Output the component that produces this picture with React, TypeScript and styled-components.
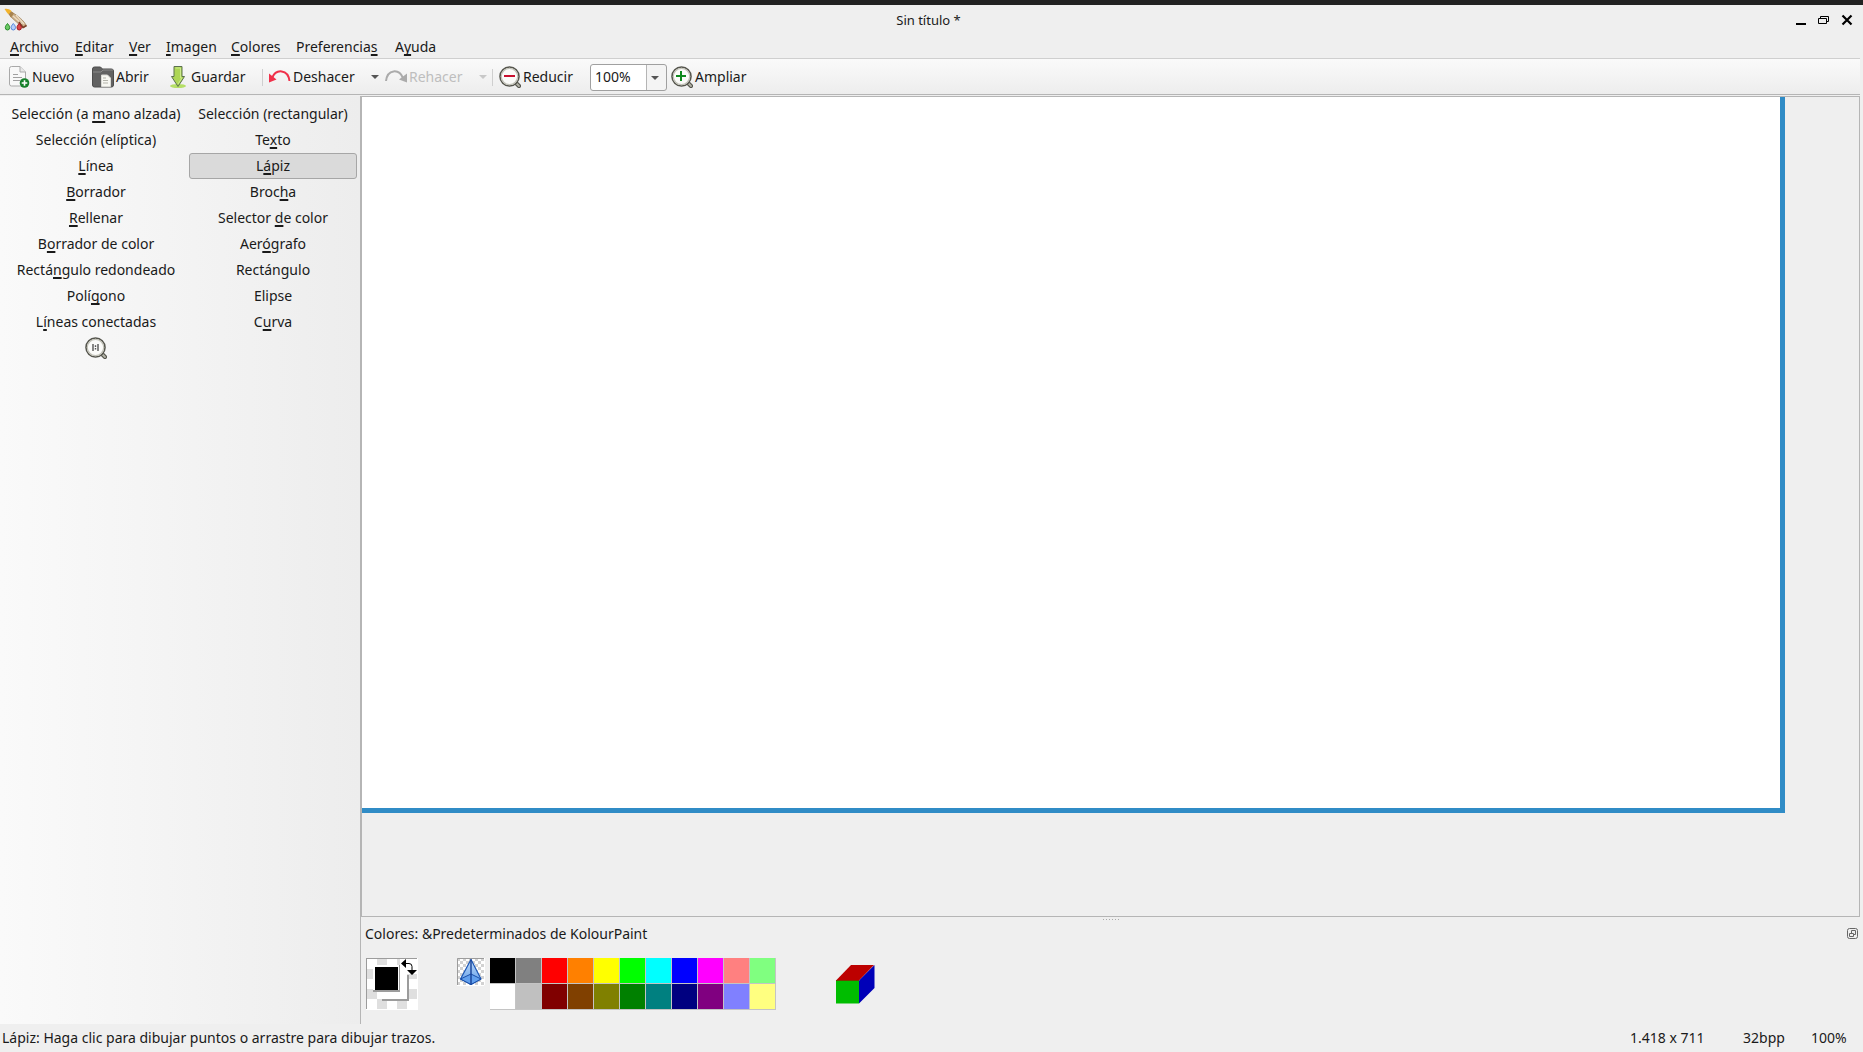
import React, { useState } from "react";
import styled, { createGlobalStyle, css } from "styled-components";

const INK = "#1a1a1a";
const LINE = "#b5b5b5";
const BASE = "#efefef";

const GlobalStyle = createGlobalStyle`
  *, *::before, *::after { box-sizing: border-box; }
  body { margin: 0; background: ${BASE}; }
  body, button, select { font: 14px/20px "Noto Sans", sans-serif; color: ${INK}; }
  button { margin: 0; padding: 0; border: 0; background: none; }
  svg { display: block; flex: none; }
`;

const Window = styled.div`
  display: flex;
  flex-direction: column;
  min-height: 100vh;
  border-top: 5px solid #222;
  background: ${BASE};
`;

const TitleBar = styled.header`
  display: grid;
  grid-template-columns: 1fr auto 1fr;
  align-items: center;
  height: 30px;
  padding: 0 10px 0 4px;
`;

const Title = styled.h1`
  margin: 0;
  font: inherit;
  font-size: 13px;
`;

const WindowControls = styled.div`
  display: flex;
  justify-content: flex-end;
  gap: 11px;
`;

const MenuBar = styled.nav`
  display: grid;
  grid-template-columns: 65px 54px 37px 65px 65px 99px 57px;
  height: 23px;
  padding-left: 10px;
`;

const MenuButton = styled.button`
  text-align: left;
  white-space: nowrap;
`;

const Key = styled.span`
  text-decoration: underline;
  text-decoration-thickness: 2px;
  text-underline-offset: 2px;
  text-decoration-skip-ink: none;
`;

const ToolBar = styled.div`
  display: flex;
  align-items: center;
  height: 37px;
  margin-right: 3px;
  padding: 1px 9px 0 8px;
  border-top: 1px solid #cfcfcf;
  border-bottom: 1px solid ${LINE};
  background: linear-gradient(#fafafa, #ededed);
`;

const ToolButton = styled.button<{ $width: number }>`
  display: flex;
  align-items: center;
  gap: 2px;
  width: ${(p) => p.$width}px;
  white-space: nowrap;
  &:disabled { color: #bebebe; }
`;

const CaretButton = styled.button<{ $width: number }>`
  width: ${(p) => p.$width}px;
  color: #555;
  &:disabled { color: #c8c8c8; }
`;

const Separator = styled.span`
  width: 1px;
  height: 17px;
  margin-right: 6px;
  background: #cfcfcf;
`;

const ZoomBox = styled.label`
  position: relative;
  width: 77px;
  height: 27px;
  margin-right: 4px;
  border: 1px solid #a0a0a0;
  border-radius: 3px;
  background: linear-gradient(to right, #fff 55px, #b5b5b5 55px, #b5b5b5 56px, #f4f4f4 56px);
  svg { position: absolute; right: 7px; top: 11px; color: #555; pointer-events: none; }
`;

const ZoomSelect = styled.select`
  width: 100%;
  height: 100%;
  padding: 0 0 0 4px;
  border: 0;
  appearance: none;
  background: transparent;
`;

const Workspace = styled.main`
  display: grid;
  grid-template-columns: 361px 1fr;
  flex: 1;
  padding-top: 1px;
`;

const SidePanel = styled.aside`
  padding: 5px 3px 0 4px;
  border-right: 1px solid ${LINE};
  background: linear-gradient(to right, #fafafa, #ededed);
`;

const ToolGrid = styled.div`
  display: grid;
  grid-template-columns: 184px 168px;
  grid-auto-rows: 26px;
  gap: 0 1px;
`;

const Tool = styled.button<{ $active: boolean }>`
  display: flex;
  align-items: center;
  justify-content: center;
  border: 1px solid transparent;
  border-radius: 3px;
  white-space: pre;
  ${(p) => p.$active && css`border-color: #a6a6a6; background: #dadada;`}
`;

const RightSide = styled.div`
  display: flex;
  flex-direction: column;
  min-width: 0;
  padding-right: 3px;
`;

const Viewport = styled.section`
  flex: 1;
  border: 1px solid ${LINE};
  overflow: hidden;
`;

const Sheet = styled.div`
  width: 1423px;
  height: 716px;
  border: solid #308cc6;
  border-width: 0 5px 5px 0;
  background: #fff;
`;

const Splitter = styled.div`
  display: flex;
  justify-content: center;
  gap: 2px;
  height: 7px;
  padding-top: 2px;
`;

const Dot = styled.i`
  width: 1px;
  height: 1px;
  background: #aaa;
`;

const DockHeader = styled.div`
  display: flex;
  align-items: center;
  justify-content: space-between;
  padding: 0 1px 0 4px;
`;

const DockTitle = styled.h2`
  margin: 0;
  font: inherit;
`;

const Palette = styled.div`
  display: flex;
  align-items: flex-start;
  padding: 14px 0 14px 5px;
`;

const Pair = styled.button`
  width: 52px;
  height: 52px;
  margin-right: 39px;
`;

const Clear = styled.button`
  width: 28px;
  height: 28px;
  margin-right: 5px;
`;

const Swatches = styled.div`
  display: grid;
  grid-template-columns: repeat(11, 26px);
  grid-auto-rows: 26px;
  margin-right: 60px;
`;

const Swatch = styled.button<{ $color: string }>`
  border: solid #c4c4c4;
  border-width: 0 1px 1px 0;
  background: ${(p) => p.$color};
`;

const CubeHolder = styled.div`
  padding-top: 7px;
`;

const StatusBar = styled.footer`
  display: flex;
  align-items: center;
  justify-content: space-between;
  height: 28px;
  padding: 0 15px 0 2px;
`;

const StatusInfo = styled.div`
  display: grid;
  grid-template-columns: 113px 68px 37px;
  white-space: nowrap;
`;

/* A "&" marks the accelerator letter. */
const Label = ({ text }: { text: string }) => {
  const at = text.indexOf("&");
  if (at < 0) return <span>{text}</span>;
  return (
    <span>
      {text.slice(0, at)}
      <Key>{text[at + 1]}</Key>
      {text.slice(at + 2)}
    </span>
  );
};

const Caret = () => (
  <svg width="8" height="4" viewBox="0 0 8 4" fill="currentColor">
    <path d="M0 0h8L4 4z" />
  </svg>
);

const AppIcon = () => (
  <svg width="24" height="24" viewBox="0 0 24 24">
    <path d="M8 4.500c5 2.500 12 8 14.500 13.500l-3.500 2C15 16 10 12 6 8z" fill="#cdb08a" stroke="#a08259" strokeWidth=".8" />
    <path d="M9 8l9 8M12 7l8 9" stroke="#ecdcc4" strokeWidth="1.200" />
    <path d="M15 14l4 5.500 3.500-2" fill="none" stroke="#7b3f2a" strokeWidth="1.600" />
    <path d="M7 3l3 2.500-3 4L4.500 6z" fill="#a8834f" />
    <path d="M.5 1c2-.8 5 0 7 2L4.500 6.500C3 5 2 3 .5 1z" fill="#f2b32c" />
    <path d="M3.500 15.500c1.700 2 2.200 3 2.200 4a2.200 2.500 0 01-4.400 0c0-1 .5-2 2.200-4z" fill="#6cc965" stroke="#258a28" />
    <path d="M9.300 15.500c1.700 2 2.200 3 2.200 4a2.200 2.500 0 01-4.400 0c0-1 .5-2 2.200-4z" fill="#b4cffb" stroke="#5585d8" />
    <path d="M15.200 15.500c1.700 2 2.200 3 2.200 4a2.200 2.500 0 01-4.400 0c0-1 .5-2 2.200-4z" fill="#d8474b" stroke="#a3141a" />
  </svg>
);

const NewIcon = () => (
  <svg width="22" height="22" viewBox="0 0 22 22">
    <path d="M1.500 2.500a2 2 0 012-2h8.500l5.500 5.500v12a2 2 0 01-2 2H3.500a2 2 0 01-2-2z" fill="#f8f8f8" stroke="#a9a9a9" />
    <path d="M12 .5V6h5.500" fill="#e8e8e8" stroke="#a9a9a9" />
    <path d="M5 8.500h5M5 11.500h9M5 14.500h7" stroke="#a0a0a0" />
    <circle cx="16.500" cy="17" r="4.800" fill="#15802a" />
    <path d="M16.500 14.200v5.600M13.700 17h5.600" stroke="#fff" strokeWidth="1.600" />
  </svg>
);

const OpenIcon = () => (
  <svg width="22" height="22" viewBox="0 0 22 22">
    <path d="M.5 3a2 2 0 012-2h6l2 2h9a2 2 0 012 2v14a2 2 0 01-2 2h-17a2 2 0 01-2-2z" fill="#626262" stroke="#4d4d4d" />
    <path d="M1 6h8l2-2h10" fill="none" stroke="#8a8a8a" />
    <path d="M9.500 9h6l3 3v8.500h-9z" fill="#f7f7f2" stroke="#d9d9d4" />
    <path d="M11 12h3M11 14.500h5M11 17h5" stroke="#b3b3aa" />
  </svg>
);

const SaveIcon = () => (
  <svg width="22" height="22" viewBox="0 0 22 22">
    <ellipse cx="11" cy="20" rx="8" ry="2" fill="#b5df67" />
    <path d="M7 .5h8v10h2.500L11 20.500 4.500 10.500H7z" fill="#add655" stroke="#5c7050" />
    <path d="M8.500 2h5v10h1.500L11 18" fill="none" stroke="#cdeb8b" />
  </svg>
);

const UndoIcon = () => (
  <svg width="22" height="22" viewBox="0 0 22 22">
    <path d="M3 12C7 2.500 19 3 20.500 15" fill="none" stroke="#f0314a" strokeWidth="2" />
    <path d="M0 7.500v9l7.500-3z" fill="#f0314a" />
  </svg>
);

const RedoIcon = () => (
  <svg width="22" height="22" viewBox="0 0 22 22">
    <path d="M18 12C14 2.500 2.500 3 1 15" fill="none" stroke="#ababab" strokeWidth="2" />
    <path d="M22 7.500v9l-8-3z" fill="#ababab" />
  </svg>
);

const Lens = ({ kind }: { kind: "in" | "out" | "fit" }) => (
  <svg width="22" height="22" viewBox="0 0 22 22">
    <path d="M16 16l4 4" stroke="#55554d" strokeWidth="4.200" strokeLinecap="round" />
    <path d="M16.500 16.500l3.500 3.500" stroke="#b4b4a8" strokeWidth="1.800" strokeLinecap="round" />
    <circle cx="10.500" cy="10.500" r="9.500" fill="#fbfbf9" stroke="#55554d" strokeWidth="1.600" />
    <circle cx="10.500" cy="10.500" r="8.200" fill="none" stroke="#c2c2b8" strokeWidth="1.200" />
    {kind === "out" && <path d="M5 10h11" stroke="#c9102f" strokeWidth="2" />}
    {kind === "in" && <path d="M5 10h10M10 5v10" stroke="#0f8a1e" strokeWidth="2" />}
    {kind === "fit" && <path d="M8 7v7M13 7v7M10.500 8.300v1.600M10.500 11v1.600" stroke="#555" strokeWidth="1.400" />}
  </svg>
);

const checks: string[] = [];
for (let r = 0; r < 5; r++) for (let c = 0; c < 5; c++) if ((r + c) % 2) checks.push(`M${1 + c * 10} ${1 + r * 10}h10v10h-10z`);

const PairIcon = () => (
  <svg width="52" height="52" viewBox="0 0 52 52" shapeRendering="crispEdges">
    <path d="M0 0h52v52H0z" fill="#fff" />
    <path d={checks.join("")} fill="#dfdfdf" />
    <path d="M0 0h51v1H1v50H0z" fill="#9c9c9c" />
    <path d="M16 17h27v26H16z" fill="#9c9c9c" />
    <path d="M16 17h25v24H16z" fill="#fff" />
    <path d="M7 7h27v27H7z" fill="#9c9c9c" />
    <path d="M7 7h26v25H7z" fill="#fff" />
    <path d="M9 9h23v23H9z" fill="#000" />
    <path d="M34 1h18v15H34z" fill="#fff" />
    <g shapeRendering="auto">
      <path d="M38 5.500h5q3 0 3 3V13" fill="none" stroke="#000" />
      <path d="M35 5.500L40 1v9zM41 12h10l-5 5z" fill="#000" />
    </g>
  </svg>
);

const PrismIcon = () => (
  <svg width="28" height="28" viewBox="0 0 28 28">
    <defs>
      <pattern id="mini" width="6" height="6" patternUnits="userSpaceOnUse">
        <path d="M0 0h6v6H0z" fill="#fff" />
        <path d="M0 0h3v3H0zM3 3h3v3H3z" fill="#d2d2d2" />
      </pattern>
      <linearGradient id="glass" x2="0" y2="1">
        <stop stopColor="#c3dcf8" />
        <stop offset="1" stopColor="#5c9bea" />
      </linearGradient>
    </defs>
    <path d="M0 0h28v28H0z" fill="url(#mini)" />
    <path d="M.5 27V.5H27" fill="none" stroke="#9c9c9c" />
    <path d="M27.500 0v27.500H0" fill="none" stroke="#fff" />
    <path d="M14 1.500L3.500 21 14 26.500 24 21z" fill="url(#glass)" stroke="#1b56b6" strokeWidth="1.200" strokeLinejoin="round" />
    <path d="M3.500 21L14 16l10 5-10 5.500z" fill="#62a0ee" stroke="#1b4fa8" />
    <path d="M14 1.500v25" stroke="#153f96" strokeWidth="1.400" />
  </svg>
);

const CubeIcon = () => (
  <svg width="40" height="40" viewBox="0 0 40 40">
    <path d="M15 0h23L23 15.500H0z" fill="#bd0000" />
    <path d="M38.500 0v23L23 38.500v-23z" fill="#0000b8" />
    <path d="M0 15.500h23v23H0z" fill="#00bd00" />
    <path d="M0 15.500h23" stroke="#704000" />
  </svg>
);

const MENUS = ["&Archivo", "&Editar", "&Ver", "&Imagen", "&Colores", "Preferencia&s", "A&yuda"];

const TOOLS = [
  "Selección (a &mano alzada)", "Selección (rectangular)",
  "Selección (elíptica)", "Te&xto",
  "&Línea", "L&ápiz",
  "&Borrador", "Broc&ha",
  "&Rellenar", "Selector &de color",
  "B&orrador de color", "Aer&ógrafo",
  "Rectá&ngulo redondeado", "Rectángulo",
  "Polí&gono", "Elipse",
  "L&íneas conectadas", "C&urva",
];

const COLORS = [
  "#000000", "#808080", "#ff0000", "#ff8000", "#ffff00", "#00ff00", "#00ffff", "#0000ff", "#ff00ff", "#ff8080", "#80ff80",
  "#ffffff", "#c0c0c0", "#800000", "#804000", "#808000", "#008000", "#008080", "#000080", "#800080", "#8080ff", "#ffff80",
];

export default function App() {
  const [tool, setTool] = useState("L&ápiz");
  return (
    <Window>
      <GlobalStyle />
      <TitleBar>
        <AppIcon />
        <Title>Sin título *</Title>
        <WindowControls>
          <button aria-label="Minimizar">
            <svg width="12" height="12"><path d="M1 10h10" stroke="#000" strokeWidth="2" /></svg>
          </button>
          <button aria-label="Restaurar">
            <svg width="12" height="12" fill="none" stroke="#000">
              <path d="M.5 4.500h8v5h-8z M2.500 4V2.500h8v5H9" />
            </svg>
          </button>
          <button aria-label="Cerrar">
            <svg width="12" height="12"><path d="M1.500 1.500l9 9M10.500 1.500l-9 9" stroke="#000" strokeWidth="2.200" /></svg>
          </button>
        </WindowControls>
      </TitleBar>

      <MenuBar>
        {MENUS.map((m) => <MenuButton key={m}><Label text={m} /></MenuButton>)}
      </MenuBar>

      <ToolBar role="toolbar">
        <ToolButton $width={84}><NewIcon />Nuevo</ToolButton>
        <ToolButton $width={75}><OpenIcon />Abrir</ToolButton>
        <ToolButton $width={95}><SaveIcon />Guardar</ToolButton>
        <Separator />
        <ToolButton $width={102}><UndoIcon />Deshacer</ToolButton>
        <CaretButton $width={14} aria-label="Historial de deshacer"><Caret /></CaretButton>
        <ToolButton $width={94} disabled><RedoIcon />Rehacer</ToolButton>
        <CaretButton $width={13} disabled aria-label="Historial de rehacer"><Caret /></CaretButton>
        <Separator />
        <ToolButton $width={91}><Lens kind="out" />Reducir</ToolButton>
        <ZoomBox>
          <ZoomSelect aria-label="Nivel de ampliación" defaultValue="100%">
            <option>50%</option>
            <option>100%</option>
            <option>200%</option>
          </ZoomSelect>
          <Caret />
        </ZoomBox>
        <ToolButton $width={84}><Lens kind="in" />Ampliar</ToolButton>
      </ToolBar>

      <Workspace>
        <SidePanel>
          <ToolGrid>
            {TOOLS.map((t) => (
              <Tool key={t} $active={t === tool} aria-pressed={t === tool} onClick={() => setTool(t)}>
                <Label text={t} />
              </Tool>
            ))}
            <Tool $active={false} aria-label="Ampliación"><Lens kind="fit" /></Tool>
          </ToolGrid>
        </SidePanel>

        <RightSide>
          <Viewport><Sheet /></Viewport>
          <Splitter>{[0, 1, 2, 3, 4, 5].map((n) => <Dot key={n} />)}</Splitter>
          <DockHeader>
            <DockTitle>Colores: &amp;Predeterminados de KolourPaint</DockTitle>
            <button aria-label="Separar panel">
              <svg width="12" height="12" fill="none" stroke="#666">
                <rect x=".5" y=".5" width="10" height="10" rx="2" />
                <path d="M2.500 5.500h4v3h-4zM4.500 5V2.500h4v4H7" />
              </svg>
            </button>
          </DockHeader>
          <Palette>
            <Pair aria-label="Intercambiar colores"><PairIcon /></Pair>
            <Clear aria-label="Transparente"><PrismIcon /></Clear>
            <Swatches>
              {COLORS.map((c) => <Swatch key={c} $color={c} aria-label={c} />)}
            </Swatches>
            <CubeHolder><CubeIcon /></CubeHolder>
          </Palette>
        </RightSide>
      </Workspace>

      <StatusBar>
        <span>Lápiz: Haga clic para dibujar puntos o arrastre para dibujar trazos.</span>
        <StatusInfo>
          <span>1.418 x 711</span>
          <span>32bpp</span>
          <span>100%</span>
        </StatusInfo>
      </StatusBar>
    </Window>
  );
}
